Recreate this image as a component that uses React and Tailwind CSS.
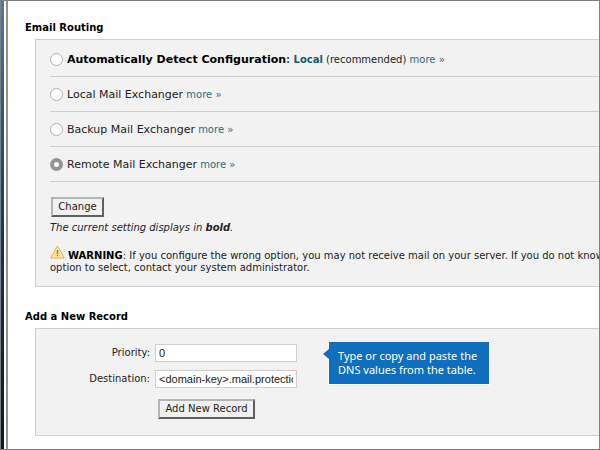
import React from "react";

const options = [
  { id: "auto", label: "Automatically Detect Configuration", current: true },
  { id: "local", label: "Local Mail Exchanger" },
  { id: "backup", label: "Backup Mail Exchanger" },
  { id: "remote", label: "Remote Mail Exchanger" },
];

const radioClass =
  "mr-1 h-[13px] w-[13px] shrink-0 appearance-none rounded-full border border-[#b0b0b0] bg-white checked:border-4 checked:border-[#929497]";
const buttonClass =
  "h-5 border-2 border-t-[#b5b5b5] border-l-[#b5b5b5] border-r-[#5f5f5f] border-b-[#5f5f5f] bg-[#f1f1f1] text-[10px] leading-4 text-[#222]";
const inputClass =
  "h-[18px] w-[142px] border border-[#cfcfcf] bg-white px-[3px] font-['Liberation_Sans',Arial,sans-serif] text-[11px] text-[#222]";

function WarningIcon() {
  return (
    <svg className="mr-[3px] inline-block h-[14px] w-[15px] align-baseline" viewBox="0 0 15 14" aria-hidden="true">
      <path d="M7.5 1 L14.2 13 H0.8 Z" fill="#fff6d5" stroke="#e9a93a" strokeWidth="1" strokeLinejoin="round" />
      <path d="M7.5 3.4 L12.2 11.8 H2.8 Z" fill="#f9dc8c" />
      <path d="M7.5 5 V9 M7.5 10 V11.3" stroke="#b9782c" strokeWidth="1.3" />
    </svg>
  );
}

function RoutingOption({ option, checked, onSelect }) {
  return (
    <div className="flex h-[35px] items-center border-b border-[#cfcfcf] first:h-[37px] first:pt-[2px]">
      <input
        type="radio"
        name="routing"
        id={option.id}
        checked={checked}
        onChange={() => onSelect(option.id)}
        className={radioClass}
      />
      <div className="pt-[2px] leading-4">
        <label htmlFor={option.id} className={option.current ? "text-[11px] font-bold text-black" : "text-[11px] text-[#222]"}>
          {option.label}
        </label>
        {option.current && (
          <>
            <b className="text-[#175a72]">: Local</b> (recommended)
          </>
        )}{" "}
        <a href="#more" className="text-[#2f6b80]">more »</a>
      </div>
    </div>
  );
}

export default function App() {
  const [selected, setSelected] = React.useState("remote");
  return (
    <div className="flex min-h-screen overflow-hidden border border-[#808080] bg-white font-['DejaVu_Sans',Verdana,sans-serif] text-[10px] leading-3 text-[#222]">
      <div className="w-[3px] shrink-0 bg-linear-to-b from-[#4c7ba6] via-[#17395c] to-[#0a1828]" />
      <div className="ml-[2px] w-[2px] shrink-0 bg-[#929292]" />
      <main className="min-w-0 flex-1 overflow-hidden pt-5 pl-[17px] whitespace-nowrap">
        <h1 className="text-[10px] leading-[14px] font-bold text-black">Email Routing</h1>
        <section className="mt-1 ml-[10px] border border-r-0 border-[#cfcfcf] bg-[#f2f2f2] pb-3 pl-[14px]">
          {options.map((option) => (
            <RoutingOption key={option.id} option={option} checked={selected === option.id} onSelect={setSelected} />
          ))}
          <button type="button" className={`${buttonClass} mt-[15px] ml-[1px] block w-[53px]`}>Change</button>
          <p className="mt-[5px] italic">
            The current setting displays in <b>bold</b>.
          </p>
          <p className="mt-[11px]">
            <WarningIcon />
            <b className="text-black">WARNING</b>: If you configure the wrong option, you may not receive mail on your server. If you do not know
            <br />
            option to select, contact your system administrator.
          </p>
        </section>

        <h2 className="mt-[23px] text-[10px] leading-[14px] font-bold text-black">Add a New Record</h2>
        <form
          onSubmit={(event) => event.preventDefault()}
          className="mt-1 ml-[10px] flex items-start border border-r-0 border-[#cfcfcf] bg-[#f2f2f2] pt-[15px] pb-4"
        >
          <div className="grid grid-cols-[114px_142px] items-center gap-x-[5px] gap-y-2">
            <label htmlFor="priority" className="text-right">Priority:</label>
            <input id="priority" defaultValue="0" className={inputClass} />
            <label htmlFor="destination" className="text-right">Destination:</label>
            <input id="destination" defaultValue="<domain-key>.mail.protection.outlook.com" className={inputClass} />
            <button type="submit" className={`${buttonClass} col-start-2 mt-[3px] ml-[3px] w-[97px]`}>Add New Record</button>
          </div>
          <aside className="relative -mt-[3px] ml-[31px] border border-white bg-[#106ebe] py-[7px] pr-3 pl-[9px] font-['Noto_Sans','Open_Sans',sans-serif] text-[11px] leading-[14px] text-white">
            <svg className="absolute top-[7px] -left-[6px] h-[10px] w-[6px]" viewBox="0 0 6 10" aria-hidden="true">
              <path d="M6 0 L0 5 L6 10 Z" fill="#106ebe" />
            </svg>
            Type or copy and paste the
            <br />
            DNS values from the table.
          </aside>
        </form>
      </main>
    </div>
  );
}
